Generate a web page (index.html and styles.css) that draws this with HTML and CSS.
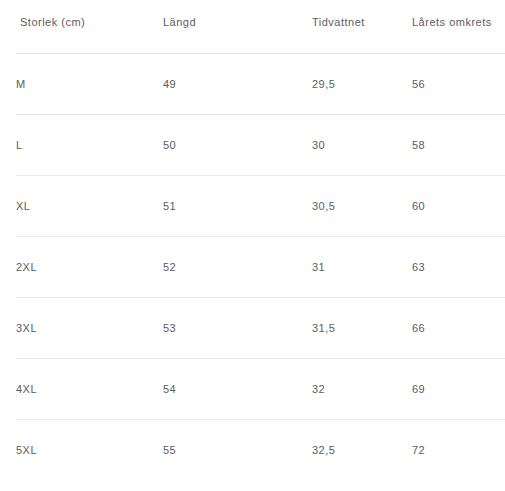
FILE: index.html
```html
<!DOCTYPE html>
<html lang="sv">
<head>
<meta charset="utf-8">
<link rel="stylesheet" href="styles.css">
</head>
<body>
<div class="table">
  <div class="row head">
    <div class="cell first">Storlek (cm)</div>
    <div class="cell">Längd</div>
    <div class="cell">Tidvattnet</div>
    <div class="cell">Lårets omkrets</div>
  </div>
  <div class="row"><div class="cell">M</div><div class="cell">49</div><div class="cell">29,5</div><div class="cell">56</div></div>
  <div class="row"><div class="cell">L</div><div class="cell">50</div><div class="cell">30</div><div class="cell">58</div></div>
  <div class="row"><div class="cell">XL</div><div class="cell">51</div><div class="cell">30,5</div><div class="cell">60</div></div>
  <div class="row"><div class="cell">2XL</div><div class="cell">52</div><div class="cell">31</div><div class="cell">63</div></div>
  <div class="row"><div class="cell">3XL</div><div class="cell">53</div><div class="cell">31,5</div><div class="cell">66</div></div>
  <div class="row"><div class="cell">4XL</div><div class="cell">54</div><div class="cell">32</div><div class="cell">69</div></div>
  <div class="row last"><div class="cell">5XL</div><div class="cell">55</div><div class="cell">32,5</div><div class="cell">72</div></div>
</div>
</body>
</html>
```
FILE: styles.css
```css
html, body {
  margin: 0;
  padding: 0;
  background: #fff;
}
body {
  padding-left: 16px;
  font-family: "Liberation Sans", Arial, sans-serif;
  font-size: 11px;
  color: #5c5c5c;
  letter-spacing: 0.5px;
}
.table {
  display: flex;
  flex-direction: column;
}
.row {
  display: grid;
  grid-template-columns: 147px 149px 100px 1fr;
  align-items: center;
  height: 60px;
  border-bottom: 1px solid #eaeaea;
}
.row.head {
  height: 53px;
  align-items: start;
}
.row.head .cell {
  padding-top: 16px;
}
.row.last {
  border-bottom: none;
}
.cell {
  line-height: 13px;
  white-space: nowrap;
}
.cell.first {
  padding-left: 4px;
}
```
